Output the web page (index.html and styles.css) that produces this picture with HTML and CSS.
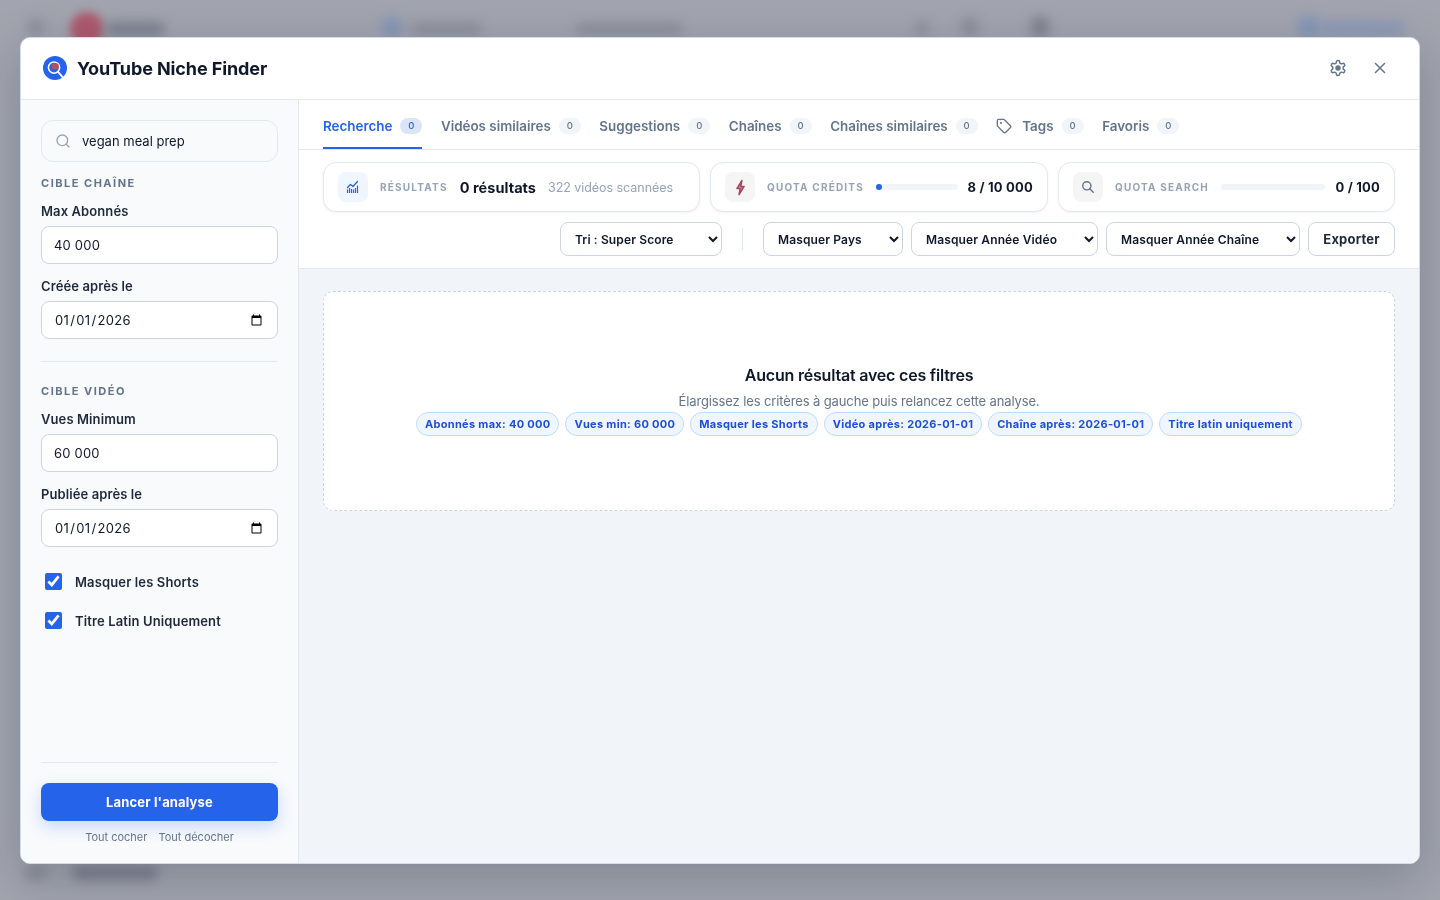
FILE: index.html
```html
<!DOCTYPE html>
<html lang="fr">
<head>
<meta charset="utf-8">
<title>YouTube Niche Finder</title>
<link rel="stylesheet" href="styles.css">
</head>
<body>
<div class="backdrop">
  <span class="blot blot-grey b1"></span>
  <span class="blot blot-red b2"></span>
  <span class="blot blot-slate b3"></span>
  <span class="blot blot-blue b4"></span>
  <span class="blot blot-grey b5"></span>
  <span class="blot blot-grey b6"></span>
  <span class="blot blot-grey b7"></span>
  <span class="blot blot-grey b8"></span>
  <span class="blot blot-grey b13"></span>
  <span class="blot blot-blue b9"></span>
  <span class="blot blot-bluebar b10"></span>
  <span class="blot blot-grey b11"></span>
  <span class="blot blot-slate b12"></span>
</div>
<div class="overlay">
  <div class="modal">
    <header class="modal-head">
      <div class="brand">
        <svg class="logo" viewBox="0 0 24 24" width="24" height="24" aria-hidden="true">
          <circle cx="12" cy="12" r="12" fill="#2563eb"/>
          <circle cx="11" cy="11.6" r="5.6" fill="none" stroke="#fff" stroke-width="1.5"/>
          <path d="M15.2 16l4.6 5.4" stroke="#fff" stroke-width="1.9" stroke-linecap="round"/>
          <rect x="9" y="7.6" width="6.6" height="5.6" rx="1.4" fill="#b4515f"/>
        </svg>
        <h1 class="brand-name">YouTube Niche Finder</h1>
      </div>
      <div class="head-actions">
        <svg class="ico-gear" viewBox="0 0 24 24" width="18" height="18" fill="none" stroke="#64748b" stroke-width="2" stroke-linecap="round" stroke-linejoin="round" aria-hidden="true">
          <path d="M12.22 2h-.44a2 2 0 0 0-2 2v.18a2 2 0 0 1-1 1.73l-.43.25a2 2 0 0 1-2 0l-.15-.08a2 2 0 0 0-2.73.73l-.22.38a2 2 0 0 0 .73 2.73l.15.1a2 2 0 0 1 1 1.72v.51a2 2 0 0 1-1 1.74l-.15.09a2 2 0 0 0-.73 2.73l.22.38a2 2 0 0 0 2.73.73l.15-.08a2 2 0 0 1 2 0l.43.25a2 2 0 0 1 1 1.73V20a2 2 0 0 0 2 2h.44a2 2 0 0 0 2-2v-.18a2 2 0 0 1 1-1.73l.43-.25a2 2 0 0 1 2 0l.15.08a2 2 0 0 0 2.73-.73l.22-.39a2 2 0 0 0-.73-2.73l-.15-.08a2 2 0 0 1-1-1.74v-.5a2 2 0 0 1 1-1.74l.15-.09a2 2 0 0 0 .73-2.73l-.22-.38a2 2 0 0 0-2.73-.73l-.15.08a2 2 0 0 1-2 0l-.43-.25a2 2 0 0 1-1-1.73V4a2 2 0 0 0-2-2z"/>
          <circle cx="12" cy="12" r="2.6" fill="#64748b"/>
        </svg>
        <svg class="ico-close" viewBox="0 0 24 24" width="18" height="18" fill="none" stroke="#64748b" stroke-width="2" stroke-linecap="round" aria-hidden="true">
          <path d="M18 6L6 18M6 6l12 12"/>
        </svg>
      </div>
    </header>
    <div class="modal-body">
      <aside class="sidebar">
        <div class="side-scroll">
          <div class="search">
            <svg viewBox="0 0 24 24" width="16" height="16" fill="none" stroke="#94a3b8" stroke-width="2" stroke-linecap="round" aria-hidden="true">
              <circle cx="11" cy="11" r="8"/><path d="M21 21l-4.3-4.3"/>
            </svg>
            <input class="search-input" type="text" value="vegan meal prep">
          </div>
          <div class="section-title first">CIBLE CHAÎNE</div>
          <label class="field-label">Max Abonnés</label>
          <input class="field" type="text" value="40 000">
          <label class="field-label">Créée après le</label>
          <input class="field date" type="date" value="2026-01-01">
          <hr class="rule">
          <div class="section-title">CIBLE VIDÉO</div>
          <label class="field-label">Vues Minimum</label>
          <input class="field" type="text" value="60 000">
          <label class="field-label">Publiée après le</label>
          <input class="field date" type="date" value="2026-01-01">
          <label class="check first-check"><input type="checkbox" checked><span>Masquer les Shorts</span></label>
          <label class="check"><input type="checkbox" checked><span>Titre Latin Uniquement</span></label>
        </div>
        <div class="side-foot">
          <button class="run" type="button">Lancer l'analyse</button>
          <div class="links"><span>Tout cocher</span><span>Tout décocher</span></div>
        </div>
      </aside>
      <main class="main">
        <div class="top">
          <nav class="tabs">
            <div class="tab active"><span>Recherche</span><b class="count">0</b></div>
            <div class="tab"><span>Vidéos similaires</span><b class="count">0</b></div>
            <div class="tab"><span>Suggestions</span><b class="count">0</b></div>
            <div class="tab"><span>Chaînes</span><b class="count">0</b></div>
            <div class="tab"><span>Chaînes similaires</span><b class="count">0</b></div>
            <div class="tab tab-tags">
              <svg viewBox="0 0 24 24" width="16" height="16" fill="none" stroke="#64748b" stroke-width="2" stroke-linecap="round" stroke-linejoin="round" aria-hidden="true">
                <path d="M12.586 2.586A2 2 0 0 0 11.172 2H4a2 2 0 0 0-2 2v7.172a2 2 0 0 0 .586 1.414l8.704 8.704a2.426 2.426 0 0 0 3.42 0l6.58-6.58a2.426 2.426 0 0 0 0-3.42z"/>
                <circle cx="7.5" cy="7.5" r=".6" fill="#64748b"/>
              </svg>
              <span>Tags</span><b class="count">0</b>
            </div>
            <div class="tab"><span>Favoris</span><b class="count">0</b></div>
          </nav>
          <div class="toolbar">
            <div class="stats">
              <div class="stat">
                <span class="stat-ico ico-blue">
                  <svg viewBox="0 0 14 14" width="14" height="14" fill="none" stroke="#2563eb" aria-hidden="true">
                    <path d="M1.5 7.5l3-3 2.5 2 4.5-5" stroke-width="1.3" stroke-linecap="round" stroke-linejoin="round"/>
                    <path d="M1.5 13V9.5M3.5 13V8M5.5 13V9M7.5 13V9.5M9.5 13V8M11.5 13V5.5" stroke-width="1.2"/>
                  </svg>
                </span>
                <span class="stat-label">RÉSULTATS</span>
                <strong class="stat-value lead">0 résultats</strong>
                <span class="stat-sub">322 vidéos scannées</span>
              </div>
              <div class="stat">
                <span class="stat-ico ico-warm">
                  <svg viewBox="0 0 24 24" width="17" height="17" fill="#c98a99" stroke="#a8485f" stroke-width="2.2" stroke-linecap="round" stroke-linejoin="round" aria-hidden="true">
                    <path d="M14 2L7 13.5h4.5L10 22l7-11.5h-4.5z"/>
                  </svg>
                </span>
                <span class="stat-label">QUOTA CRÉDITS</span>
                <span class="bar"><i class="dot"></i></span>
                <strong class="stat-value">8 / 10 000</strong>
              </div>
              <div class="stat">
                <span class="stat-ico ico-grey">
                  <svg viewBox="0 0 24 24" width="14" height="14" fill="none" stroke="#64748b" stroke-width="2.4" stroke-linecap="round" aria-hidden="true">
                    <circle cx="10" cy="10" r="7"/><path d="M21 21l-6-6"/>
                  </svg>
                </span>
                <span class="stat-label">QUOTA SEARCH</span>
                <span class="bar"></span>
                <strong class="stat-value">0 / 100</strong>
              </div>
            </div>
            <div class="filters">
              <select class="sel sel-sort"><option>Tri : Super Score</option></select>
              <span class="sep"></span>
              <select class="sel sel-country"><option>Masquer Pays</option></select>
              <select class="sel sel-vyear"><option>Masquer Année Vidéo</option></select>
              <select class="sel sel-cyear"><option>Masquer Année Chaîne</option></select>
              <button class="export" type="button">Exporter</button>
            </div>
          </div>
        </div>
        <section class="content">
          <div class="empty">
            <h2 class="empty-title">Aucun résultat avec ces filtres</h2>
            <p class="empty-sub">Élargissez les critères à gauche puis relancez cette analyse.</p>
            <div class="chips">
              <span class="chip">Abonnés max: 40 000</span>
              <span class="chip">Vues min: 60 000</span>
              <span class="chip">Masquer les Shorts</span>
              <span class="chip">Vidéo après: 2026-01-01</span>
              <span class="chip">Chaîne après: 2026-01-01</span>
              <span class="chip">Titre latin uniquement</span>
            </div>
          </div>
        </section>
      </main>
    </div>
  </div>
</div>
</body>
</html>
```
FILE: styles.css
```css
* { box-sizing: border-box; }
html, body { height: 100%; margin: 0; }
body {
  font-family: Inter, "Noto Sans", sans-serif;
  color: #0f172a;
  background: #a2a5af;
  overflow: hidden;
}

/* Blurred page behind the dialog */
.backdrop { position: fixed; inset: 0; overflow: hidden; }
.blot { position: absolute; border-radius: 50%; filter: blur(6px); }
.blot-grey { background: #8b8e99; }
.blot-red { background: #ad5a6c; filter: blur(4px); }
.blot-slate { background: #7c808e; border-radius: 6px; }
.blot-blue { background: #8596b6; }
.blot-bluebar { background: #8f9ab4; border-radius: 6px; filter: blur(4px); }
.b1 { left: 27px; top: 18px; width: 18px; height: 18px; }
.b2 { left: 70px; top: 12px; width: 34px; height: 34px; }
.b3 { left: 105px; top: 22px; width: 60px; height: 14px; }
.b4 { left: 381px; top: 16px; width: 22px; height: 22px; }
.b5 { left: 410px; top: 23px; width: 72px; height: 12px; border-radius: 6px; }
.b6 { left: 575px; top: 23px; width: 108px; height: 12px; border-radius: 6px; }
.b7 { left: 915px; top: 20px; width: 14px; height: 16px; }
.b8 { left: 960px; top: 17px; width: 20px; height: 20px; }
.b13 { left: 1030px; top: 16px; width: 20px; height: 22px; background: #7f828d; }
.b9 { left: 1297px; top: 15px; width: 24px; height: 24px; }
.b10 { left: 1320px; top: 20px; width: 84px; height: 16px; }
.b11 { left: 24px; top: 864px; width: 24px; height: 17px; }
.b12 { left: 72px; top: 866px; width: 86px; height: 14px; }

.overlay { position: fixed; inset: 0; padding: 37px 20px 36px; }
.modal {
  display: flex;
  flex-direction: column;
  height: 827px;
  background: #fff;
  border: 1px solid #d3dcea;
  border-radius: 10px;
  overflow: hidden;
  box-shadow: 0 14px 50px rgba(15, 23, 42, .22);
}

/* Header */
.modal-head {
  display: flex;
  align-items: center;
  justify-content: space-between;
  flex: none;
  height: 62px;
  padding: 0 30px 2px 22px;
  border-bottom: 1px solid #e2e8f0;
}
.brand { display: flex; align-items: center; gap: 10px; }
.logo { display: block; }
.brand-name { margin: 0; padding-top: 2px; font-size: 18px; line-height: 24px; font-weight: 700; color: #0f172a; letter-spacing: -.1px; }
.head-actions { display: flex; align-items: center; gap: 24px; }
.head-actions svg { display: block; }

.modal-body { display: flex; flex: 1; min-height: 0; }

/* Sidebar */
.sidebar {
  display: flex;
  flex-direction: column;
  flex: none;
  width: 278px;
  padding: 20px 20px 0;
  background: #f8fafc;
  border-right: 1px solid #e2e8f0;
}
.side-scroll { flex: 1; display: flex; flex-direction: column; }
.search {
  display: flex;
  align-items: center;
  gap: 11px;
  height: 42px;
  padding: 0 13px;
  background: #f8fafc;
  border: 1px solid #e2e8f0;
  border-radius: 12px;
}
.search svg { flex: none; }
.search-input {
  flex: 1;
  min-width: 0;
  padding: 0;
  border: 0;
  outline: 0;
  background: transparent;
  font: 400 13px/18px Inter, sans-serif;
  color: #0f172a;
}
.section-title {
  font-size: 11px;
  line-height: 14px;
  font-weight: 700;
  letter-spacing: 1.5px;
  color: #64748b;
}
.section-title.first { margin-top: 14px; }
.field-label {
  display: block;
  margin: 14px 0 7px;
  font-size: 13px;
  line-height: 16px;
  font-weight: 600;
  letter-spacing: .1px;
  color: #1e293b;
}
.section-title + .field-label { margin-top: 13px; }
.field {
  display: block;
  width: 100%;
  height: 38px;
  padding: 0 12px;
  background: #fff;
  border: 1px solid #cbd5e1;
  border-radius: 8px;
  font: 400 13px Inter, sans-serif;
  letter-spacing: .2px;
  color: #0f172a;
  outline: 0;
}
.field.date { letter-spacing: .35px; }
.rule { width: 100%; height: 1px; margin: 22px 0; border: 0; background: #e2e8f0; }
.check {
  display: flex;
  align-items: center;
  gap: 13px;
  margin-top: 22px;
  padding-left: 4px;
  height: 17px;
  font-size: 13px;
  font-weight: 600;
  letter-spacing: .13px;
  color: #1e293b;
}
.check.first-check { margin-top: 26px; }
.check input { width: 17px; height: 17px; margin: 0; accent-color: #2563eb; }
.side-foot { flex: none; height: 101px; padding-top: 20px; border-top: 1px solid #e2e8f0; }
.run {
  display: block;
  width: 100%;
  height: 38px;
  border: 0;
  border-radius: 8px;
  background: #2563eb;
  color: #fff;
  font: 700 13px Inter, sans-serif;
  letter-spacing: .15px;
  box-shadow: 0 6px 16px rgba(37, 99, 235, .22);
}
.links {
  display: flex;
  justify-content: center;
  gap: 11px;
  margin-top: 9px;
  font-size: 11px;
  line-height: 14px;
  color: #64748b;
}

/* Main */
.main { flex: 1; min-width: 0; display: flex; flex-direction: column; background: #f1f5f9; }
.top { flex: none; background: #fff; border-bottom: 1px solid #e2e8f0; }
.tabs {
  display: flex;
  gap: 18.6px;
  height: 50px;
  padding: 0 24px;
  border-bottom: 1px solid #e2e8f0;
}
.tab {
  display: flex;
  align-items: center;
  gap: 8px;
  height: 49px;
  padding-top: 5px;
  font-size: 13.4px;
  font-weight: 600;
  color: #64748b;
  border-bottom: 2px solid transparent;
}
.tab.active { color: #2563eb; border-bottom-color: #2563eb; }
.tab-tags { gap: 0; }
.tab-tags svg { margin-right: 10px; }
.tab-tags span { margin-right: 8px; }
.count {
  display: block;
  width: 22px;
  height: 16px;
  border-radius: 8px;
  background: #f1f5f9;
  font-size: 9.5px;
  line-height: 16px;
  font-weight: 500;
  text-align: center;
  color: #64748b;
}
.tab.active .count { background: #dbe5f5; color: #2563eb; }
.toolbar { padding: 12px 24px; }
.stats { display: grid; grid-template-columns: 377px 338px 337px; gap: 10px; }
.stat {
  display: flex;
  align-items: center;
  height: 50px;
  padding: 0 14px;
  background: #fff;
  border: 1px solid #e2e8f0;
  border-radius: 13px;
  box-shadow: 0 1px 3px rgba(15, 23, 42, .05);
}
.stat-ico {
  display: flex;
  align-items: center;
  justify-content: center;
  flex: none;
  width: 30px;
  height: 30px;
  margin-right: 12px;
  border-radius: 8px;
}
.ico-blue { background: #eff6ff; }
.ico-warm, .ico-grey { background: #f4f5f4; }
.stat-label {
  flex: none;
  margin-right: 12px;
  font-size: 10px;
  font-weight: 700;
  letter-spacing: 1.2px;
  color: #94a3b8;
}
.stat-value { flex: none; font-size: 13px; font-weight: 700; letter-spacing: .2px; color: #0f172a; }
.stat-value.lead { font-size: 14.5px; letter-spacing: .05px; margin-right: 12px; }
.stat-sub { font-size: 12.5px; letter-spacing: -.05px; color: #94a3b8; }
.bar {
  display: block;
  flex: 1;
  height: 6px;
  margin-right: 10px;
  border-radius: 3px;
  background: #f1f5f9;
}
.dot { display: block; width: 6px; height: 6px; border-radius: 50%; background: #2563eb; }
.filters { display: flex; justify-content: flex-end; align-items: center; gap: 8px; margin-top: 10px; }
.sel {
  height: 34px;
  padding: 0 10px;
  background: #fff;
  border: 1px solid #cbd5e1;
  border-radius: 8px;
  font: 600 12px Inter, sans-serif;
  letter-spacing: .13px;
  color: #0f172a;
}
.sel-sort { width: 162px; }
.sel-country { width: 140px; }
.sel-vyear { width: 187px; }
.sel-cyear { width: 194px; }
.sep { width: 1px; height: 22px; margin: 0 12px; background: #e2e8f0; }
.export {
  width: 87px;
  height: 34px;
  padding: 0;
  background: #fff;
  border: 1px solid #cbd5e1;
  border-radius: 8px;
  font: 700 13px Inter, sans-serif;
  letter-spacing: .2px;
  color: #1e293b;
}

/* Empty state */
.content { flex: 1; padding: 22px 24px; }
.empty {
  display: flex;
  flex-direction: column;
  align-items: center;
  justify-content: center;
  height: 220px;
  padding-bottom: 4px;
  background: #fff;
  border: 1px dashed #cbd5e1;
  border-radius: 10px;
}
.empty-title { margin: 0 0 4px; font-size: 16px; line-height: 24px; font-weight: 600; letter-spacing: -.2px; color: #0f172a; }
.empty-sub { margin: 0; font-size: 13px; line-height: 20px; letter-spacing: -.12px; color: #64748b; }
.chips { display: flex; justify-content: center; gap: 6px; margin-top: 1px; }
.chip {
  height: 24px;
  padding: 0 8px;
  border: 1px solid #bfdbfe;
  border-radius: 12px;
  background: #eff6ff;
  font-size: 11px;
  line-height: 22px;
  font-weight: 700;
  letter-spacing: .3px;
  color: #1d4ed8;
  white-space: nowrap;
}
```
